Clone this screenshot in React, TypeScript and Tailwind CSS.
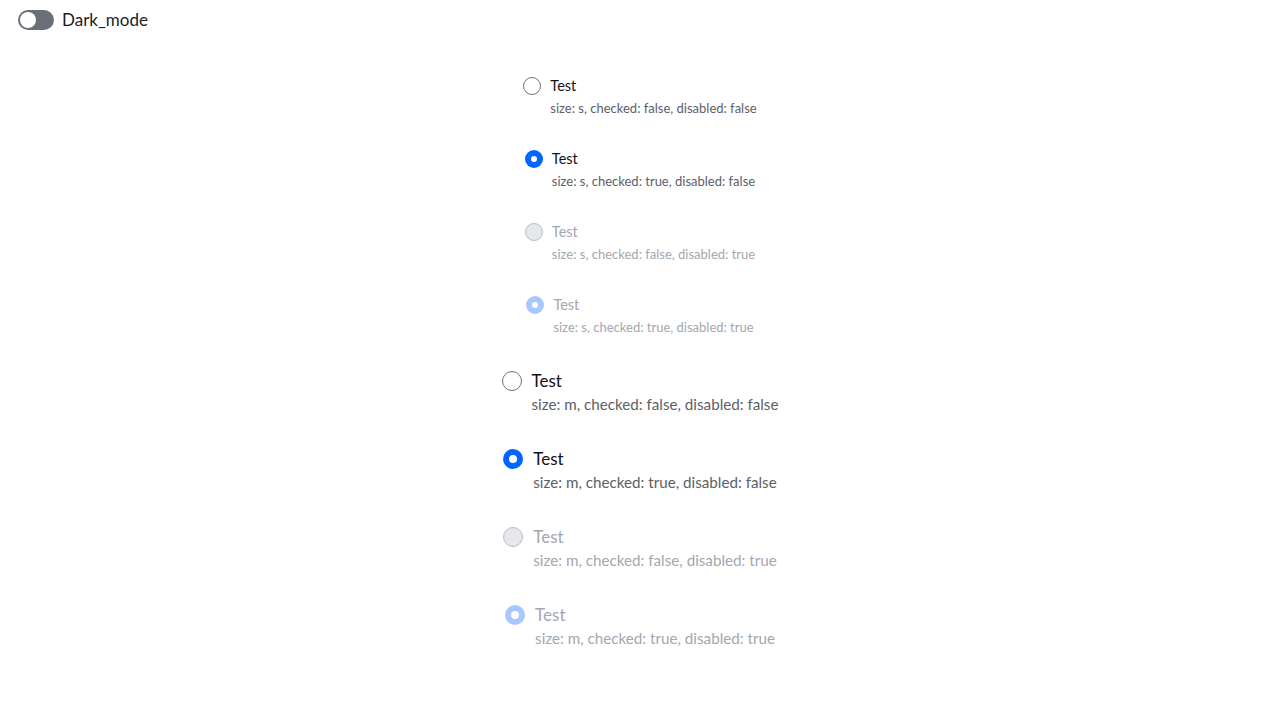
import { useState } from "react";

type Size = "s" | "m";

interface RadioCase {
  size: Size;
  checked: boolean;
  disabled: boolean;
}

const CASES: RadioCase[] = [
  { size: "s", checked: false, disabled: false },
  { size: "s", checked: true, disabled: false },
  { size: "s", checked: false, disabled: true },
  { size: "s", checked: true, disabled: true },
  { size: "m", checked: false, disabled: false },
  { size: "m", checked: true, disabled: false },
  { size: "m", checked: false, disabled: true },
  { size: "m", checked: true, disabled: true },
];

function RadioMark({ size, checked, disabled }: RadioCase) {
  const dim = size === "s" ? "w-[18px] h-[18px]" : "w-5 h-5";
  if (checked) {
    return (
      <span
        className={`${dim} shrink-0 rounded-full flex items-center justify-center ${
          disabled ? "bg-[#a8c6ff]" : "bg-[#0066ff]"
        }`}
      >
        <span
          className={`${
            size === "s" ? "w-[6px] h-[6px]" : "w-2 h-2"
          } rounded-full bg-white`}
        />
      </span>
    );
  }
  return (
    <span
      className={`${dim} shrink-0 rounded-full border ${
        disabled
          ? "bg-[#e6e8ec] border-[#b9bdc4]"
          : "bg-white border-[#6f737a]"
      }`}
    />
  );
}

function RadioItem(props: RadioCase) {
  const { size, checked, disabled } = props;
  const isS = size === "s";
  return (
    <label
      className={`flex flex-col items-start ${
        disabled ? "cursor-not-allowed" : "cursor-pointer"
      }`}
    >
      <div className={`flex items-center ${isS ? "gap-[9px]" : "gap-[10px]"}`}>
        <RadioMark {...props} />
        <span
          className={`${isS ? "text-[14.5px] leading-5" : "text-[17px] leading-6"} ${
            disabled ? "text-[#a3a7ae]" : "text-[#111318]"
          }`}
        >
          Test
        </span>
      </div>
      <span
        className={`${
          isS
            ? "text-[13px] leading-4 mt-1 ml-[27px]"
            : "text-[15.2px] leading-5 mt-[1px] ml-[30px]"
        } ${disabled ? "text-[#a3a7ae]" : "text-[#5c6069]"}`}
      >
        size: {size}, checked: {String(checked)}, disabled: {String(disabled)}
      </span>
    </label>
  );
}

export default function App() {
  const [dark, setDark] = useState(false);

  return (
    <div
      className="min-h-screen bg-white"
      style={{ fontFamily: "Lato, 'Noto Sans', sans-serif" }}
    >
      {/* Header toggle */}
      <div className="flex items-center gap-2 px-[18px] pt-[10px]">
        <button
          type="button"
          onClick={() => setDark(!dark)}
          className="w-9 h-5 rounded-full bg-[#6b6f7a] flex items-center px-[2px]"
          aria-label="Dark mode"
        >
          <span className="w-4 h-4 rounded-full bg-white" />
        </button>
        <span className="text-[17px] leading-5 text-[#1b1d22]">Dark_mode</span>
      </div>

      <main className="flex flex-col items-center pt-[46px]">
        {CASES.map((c, i) => (
          <div
            key={i}
            className={i === 0 ? "" : i === 4 ? "mt-[34px]" : "mt-[33px]"}
          >
            <RadioItem {...c} />
          </div>
        ))}
      </main>
    </div>
  );
}
